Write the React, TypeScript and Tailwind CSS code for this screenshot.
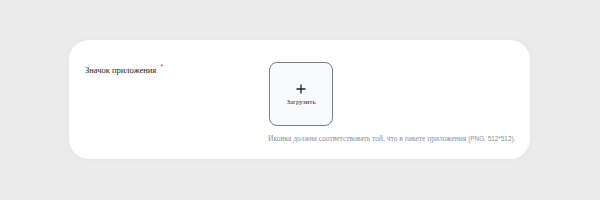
export default function App() {
  return (
    <div className="flex h-[200px] w-[600px] items-start bg-[#ebebeb] pl-[69px] pt-[40px]">
      <div className="flex h-[119px] w-[461px] rounded-[20px] bg-white pl-[16px] pt-[22px] shadow-[0_0_6px_rgba(0,0,0,0.03)]">
        <div className="w-[183px] pt-[2px] font-['Liberation_Serif',serif] text-[8.5px] text-[#222]">
          Значок приложения
          <span className="relative -top-[4px] ml-[4px] font-['Liberation_Sans',sans-serif] text-[8px] text-[#ef4444]">*</span>
        </div>
        <div className="flex flex-col">
          <div className="ml-[1px] flex h-[64px] w-[64px] flex-col items-center justify-center rounded-[8px] border border-[#7a7f8a] bg-[#f9fafb]">
            <svg width="10" height="10" viewBox="0 0 10 10" className="mt-[3px]">
              <path d="M5 0.5v9M0.5 5h9" stroke="#222" strokeWidth="1.3" />
            </svg>
            <div className="mt-[3px] font-['Liberation_Serif',serif] text-[7px] text-[#333]">Загрузить</div>
          </div>
          <div className="mt-[7px] flex items-baseline whitespace-nowrap text-[#8b8f99]">
            <span className="font-['Liberation_Serif',serif] text-[7.5px]">Иконка должна соответствовать той, что в пакете приложения&nbsp;</span>
            <span className="font-['Liberation_Sans',sans-serif] text-[6.4px]">(PNG, 512*512).</span>
          </div>
        </div>
      </div>
    </div>
  );
}
